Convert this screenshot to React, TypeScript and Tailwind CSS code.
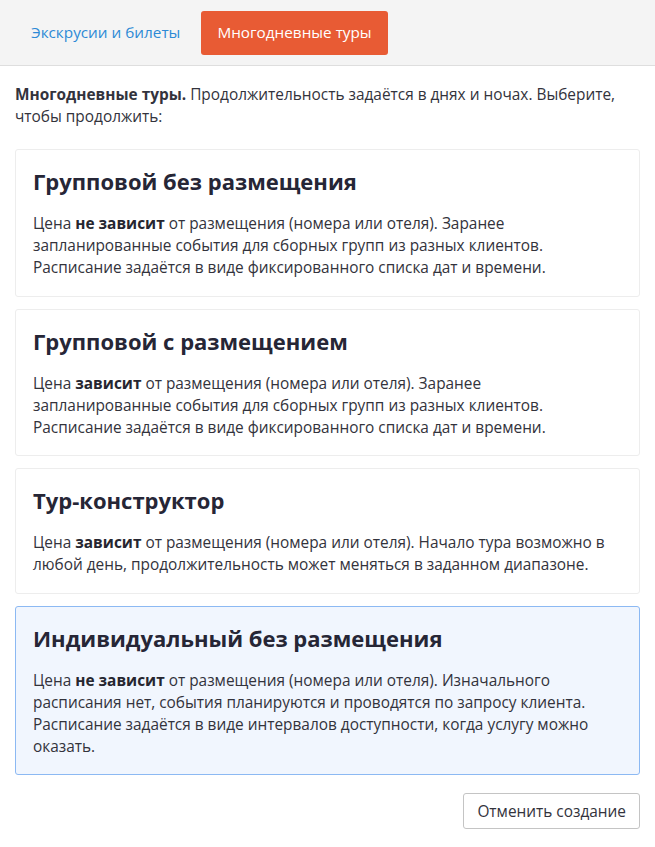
const tabs = [
  { id: 'excursions', label: 'Экскрусии и билеты' },
  { id: 'multiday', label: 'Многодневные туры' },
];

type TourType = {
  id: string;
  title: string;
  bold: string;
  lines: string[];
  selected?: boolean;
};

const tourTypes: TourType[] = [
  {
    id: 'group',
    title: 'Групповой без размещения',
    bold: 'не зависит',
    lines: [
      ' от размещения (номера или отеля). Заранее',
      'запланированные события для сборных групп из разных клиентов.',
      'Расписание задаётся в виде фиксированного списка дат и времени.',
    ],
  },
  {
    id: 'group-stay',
    title: 'Групповой с размещением',
    bold: 'зависит',
    lines: [
      ' от размещения (номера или отеля). Заранее',
      'запланированные события для сборных групп из разных клиентов.',
      'Расписание задаётся в виде фиксированного списка дат и времени.',
    ],
  },
  {
    id: 'constructor',
    title: 'Тур-конструктор',
    bold: 'зависит',
    lines: [
      ' от размещения (номера или отеля). Начало тура возможно в',
      'любой день, продолжительность может меняться в заданном диапазоне.',
    ],
  },
  {
    id: 'individual',
    title: 'Индивидуальный без размещения',
    bold: 'не зависит',
    lines: [
      ' от размещения (номера или отеля). Изначального',
      'расписания нет, события планируются и проводятся по запросу клиента.',
      'Расписание задаётся в виде интервалов доступности, когда услугу можно',
      'оказать.',
    ],
    selected: true,
  },
];

function TourCard({ tour }: { tour: TourType }) {
  return (
    <div
      className={`rounded-[3px] border px-[17px] pt-4 pb-4 ${
        tour.selected
          ? 'border-[#8cb9f3] bg-[#f1f6fe]'
          : 'border-[#ededed] bg-white'
      }`}
    >
      <h2 className="text-[22px] leading-[30px] font-bold text-[#262636]">
        {tour.title}
      </h2>
      <p className="mt-[17px] text-[15.4px] leading-[22.2px] whitespace-nowrap text-[#33333c]">
        Цена <b className="font-bold text-[#262630]">{tour.bold}</b>
        {tour.lines.map((line, i) => (
          <span key={i}>
            {i > 0 && <br />}
            {line}
          </span>
        ))}
      </p>
    </div>
  );
}

export default function App() {
  const active = 'multiday';

  return (
    <div className="min-h-[847px] bg-white font-['Open_Sans',sans-serif]">
      {/* Tabs */}
      <div className="flex h-[66px] items-center gap-[5px] border-b border-[#dedede] bg-[#f4f4f4] pl-[15px]">
        {tabs.map((tab) => (
          <button
            key={tab.id}
            className={`h-[44px] rounded-[3px] px-4 text-[15.3px] ${
              tab.id === active
                ? 'bg-[#e85b34] text-white'
                : 'text-[#2d8ad6]'
            }`}
          >
            {tab.label}
          </button>
        ))}
      </div>

      <div className="px-[15px] pt-[18px]">
        <p className="w-[625px] text-[15.4px] leading-[22px] text-[#33333c]">
          <b className="font-bold text-[#33333d]">Многодневные туры.</b> Продолжительность задаётся в днях и ночах. Выберите, чтобы продолжить:
        </p>

        <div className="mt-[21px] flex flex-col gap-3">
          {tourTypes.map((tour) => (
            <TourCard key={tour.id} tour={tour} />
          ))}
        </div>

        <div className="mt-[18px] flex justify-end">
          <button className="h-[36px] rounded-[3px] border border-[#c4c4c4] bg-white px-[13px] text-[15.4px] text-[#33333c]">
            Отменить создание
          </button>
        </div>
      </div>
    </div>
  );
}
